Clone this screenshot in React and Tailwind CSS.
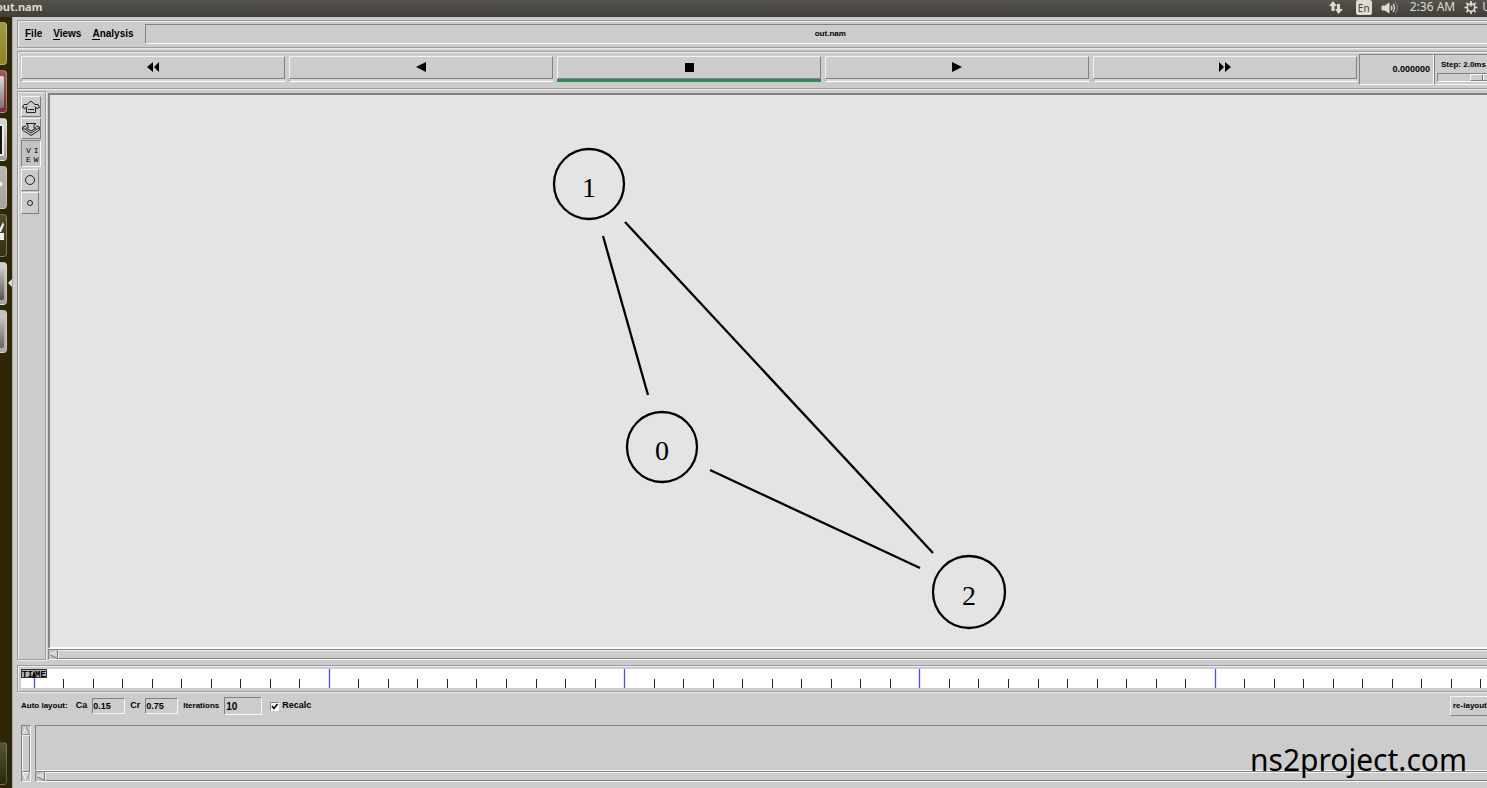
import React from 'react';

const raised = 'border border-t-[#f2f2f2] border-l-[#f2f2f2] border-r-[#808080] border-b-[#808080]';
const sunken = 'border border-t-[#828282] border-l-[#828282] border-r-[#f8f8f8] border-b-[#f8f8f8]';
const groove = 'border border-[#9c9c9c] shadow-[inset_1px_1px_0_#ececec,1px_1px_0_#ececec]';

const launcherItems = [
  { name: 'Files', className: 'bg-linear-to-b from-[#9f9a45] to-[#8d8521]' },
  { name: 'Browser', className: 'bg-linear-to-b from-[#a05a5a] to-[#7d2c32]', inner: 'bg-linear-to-b from-[#dddddd] to-[#777777]' },
  { name: 'Terminal', className: 'bg-linear-to-b from-[#d8d8d4] to-[#9b9b98]', inner: 'bg-[#151515] border-y-2 border-r-2 border-[#eeeeee]' },
  { name: 'Editor', className: 'bg-linear-to-b from-[#b9b9b4] to-[#a4a49f]', glyph: 'M0 9 L3 12 L0 15 Z' },
  { name: 'Settings', className: 'bg-linear-to-b from-[#4c4a2c] to-[#35320f]', glyph: 'M0 8 L3 2 L4 5 L1 12 L0 12 Z M0 13 H4 V20 H0 Z' },
  { name: 'Simulator', className: 'bg-linear-to-b from-[#d0d0cc] to-[#a2a29d]', inner: 'bg-linear-to-b from-[#c8c8c8] to-[#555555]', active: true },
  { name: 'Workspace', className: 'bg-linear-to-b from-[#c4c4c0] to-[#a8a8a4]', inner: 'bg-linear-to-b from-[#c8c8c8] to-[#666666]' },
];

const nodes = [
  { id: 1, x: 539, y: 89, r: 35 },
  { id: 0, x: 612, y: 352, r: 35 },
  { id: 2, x: 919, y: 497, r: 36 },
];

const links = [
  [553, 141, 598, 300],
  [575, 127, 883, 458],
  [660, 375, 870, 473],
];

const transport = [
  { label: 'Rewind', path: 'M6 0 V10 L0 5 Z M12 0 V10 L7 5 Z' },
  { label: 'Play backward', path: 'M11 0 V10 L1 5 Z' },
  { label: 'Stop', path: 'M2 1 H11 V10 H2 Z', active: true },
  { label: 'Play forward', path: 'M1 0 V10 L11 5 Z' },
  { label: 'Fast forward', path: 'M0 0 V10 L5 5 Z M6 0 V10 L12 5 Z' },
];

const TopBar = () => (
  <header className="flex h-[17px] items-start justify-between overflow-hidden bg-linear-to-b from-[#55534c] to-[#403f3a] font-['Noto_Sans',sans-serif] text-[12px] leading-[14px] text-[#dfdbd2]">
    <span className="-ml-1 text-[11px] font-bold">out.nam</span>
    <div className="-mr-1 flex items-start">
      <svg className="mr-3 h-4 w-4" viewBox="0 0 16 16" fill="#dfdbd2">
        <path d="M5 1 L9 6 H6.500 V11 H3.500 V6 H1 Z M9 4 H12 V9 H15 L10.500 14 L7 9 H9 Z" />
      </svg>
      <button className="mr-2 h-[15px] w-4 rounded-xs bg-[#dfdbd2] text-center text-[10px] text-[#45443f]">En</button>
      <svg className="mr-[10px] h-4 w-5" viewBox="0 0 20 16" fill="none" stroke="#dfdbd2">
        <path d="M2 6 H5 L9 3 V13 L5 10 H2 Z" fill="#dfdbd2" />
        <path d="M11 6 Q13 8 11 10 M13 4 Q16 8 13 12" strokeWidth="1.300" />
        <path d="M15 2 Q20 8 15 14" stroke="#8c8980" />
      </svg>
      <span className="mr-2">2:36 AM</span>
      <svg className="mr-[3px] h-[15px] w-4" viewBox="0 0 16 16" fill="none" stroke="#dfdbd2" strokeWidth="1.800">
        <circle cx="8" cy="8" r="4" />
        <path d="M8 1 V7 M8 12 V15 M1 8 H4 M12 8 H15 M3 3 L5 5 M13 3 L11 5 M3 13 L5 11 M13 13 L11 11" />
      </svg>
      <span>U</span>
    </div>
  </header>
);

const Launcher = () => (
  <aside className="relative flex w-3 shrink-0 flex-col gap-[5px] bg-[#2d2705] pt-[5px] pb-[3px]">
    {launcherItems.map((item) => (
      <div key={item.name} className={`relative flex h-[43px] w-[7px] items-center rounded-r-sm border-y border-r border-white/30 ${item.className}`}>
        {item.inner && <div className={`h-8 w-1 rounded-r-xs ${item.inner}`} />}
        {item.glyph && (
          <svg className="h-8 w-1" viewBox="0 0 4 32" fill="#f2eef4"><path d={item.glyph} /></svg>
        )}
        {item.active && (
          <svg className="absolute top-4 left-2 h-2 w-1" viewBox="0 0 4 8" fill="#dddddd"><path d="M4 0 V8 L0 4 Z" /></svg>
        )}
      </div>
    ))}
    <div className="mt-auto h-[43px] w-[7px] rounded-r-sm border-y border-r border-white/20 bg-linear-to-b from-[#55543c] to-[#2c2908]" />
  </aside>
);

const MenuBar = () => (
  <nav className={`flex h-7 items-center pl-[7px] ${groove}`}>
    {['File', 'Views', 'Analysis'].map((item) => (
      <button key={item} className="mr-[11px] text-[10px] leading-4">
        <span className="border-b border-black">{item[0]}</span>{item.slice(1)}
      </button>
    ))}
    <div className={`h-5 flex-1 text-center text-[8px] leading-[18px] ${sunken}`}>out.nam</div>
  </nav>
);

const Transport = () => (
  <section className={`flex h-[38px] gap-[2px] pt-[2px] pl-[3px] ${groove}`}>
    <div className="flex flex-1 gap-1 pt-[2px]">
      {transport.map((item) => (
        <div key={item.label} className="flex-1">
          <button aria-label={item.label} className={`flex h-[23px] w-full items-center justify-center ${raised}`}>
            <svg className="h-[11px] w-3" viewBox="0 0 12 11"><path d={item.path} /></svg>
          </button>
          <div className={item.active ? 'h-[3px] bg-[#2e8b57]' : 'h-[3px] border-b border-l border-b-white border-l-[#999999] bg-[#d6d6d6]'} />
        </div>
      ))}
    </div>
    <div className="flex">
      <div className={`h-[31px] w-[75px] pr-[3px] text-right text-[9px] leading-7 ${sunken}`}>0.000000</div>
      <div className={`h-[31px] w-[82px] pt-1 pl-[2px] ${sunken}`}>
        <label htmlFor="step" className="block pl-1 text-[8px] leading-3 whitespace-nowrap">Step: 2.0ms</label>
        <input
          id="step"
          type="range"
          defaultValue="70"
          className={`mt-[2px] block h-[9px] w-full appearance-none [&::-webkit-slider-thumb]:h-[7px] [&::-webkit-slider-thumb]:w-[30px] [&::-webkit-slider-thumb]:appearance-none [&::-webkit-slider-thumb]:border [&::-webkit-slider-thumb]:border-t-white [&::-webkit-slider-thumb]:border-r-[#808080] [&::-webkit-slider-thumb]:border-b-[#808080] [&::-webkit-slider-thumb]:border-l-white [&::-webkit-slider-thumb]:bg-[linear-gradient(90deg,#ccc_11px,#777_11px,#777_12px,#fff_12px,#fff_13px,#ccc_13px)] ${sunken}`}
        />
      </div>
    </div>
  </section>
);

const ToolPanel = () => (
  <div className={`flex w-[29px] shrink-0 flex-col items-start gap-px pt-1 pl-[3px] ${groove}`}>
    <button aria-label="Zoom in" className={`flex h-[21px] w-5 items-center justify-center ${raised}`}>
      <svg className="h-4 w-[18px] shrink-0" viewBox="0 0 18 16" fill="none" stroke="#222222">
        <path d="M9 2 L13 5.500 H16 L17.500 8.500 L15 9.500 L12.500 7.500 M9 2 L5 5.500 H2 L.5 8.500 L3 9.500 L5.500 7.500 M4.500 8 V13.500 H13.500 V8 M6 10.500 H12" />
      </svg>
    </button>
    <button aria-label="Zoom out" className={`flex h-[21px] w-5 items-center justify-center ${raised}`}>
      <svg className="h-4 w-[18px] shrink-0" viewBox="0 0 18 16" fill="none" stroke="#222222">
        <path d="M4 2.500 H14 L12 4 V7 H14 L9 10 L4 7 H6 V4 Z M4 5 L.5 6 V9 L9 14.500 L17.500 9 V6 L14 5 M.5 6.500 L9 12 L17.500 6.500" />
      </svg>
    </button>
    <button className={`h-[27px] w-5 bg-[#c2c2c2] pt-[2px] pl-1 font-['Liberation_Mono',monospace] text-[8px] leading-[9px] font-normal ${sunken}`}>
      <span className="flex gap-[3px]"><span>V</span><span>I</span></span>
      <span className="flex gap-[3px]"><span>E</span><span>W</span></span>
    </button>
    <button aria-label="Larger nodes" className={`mt-px flex h-[22px] w-[18px] items-center justify-center ${raised}`}>
      <svg className="h-3 w-3" viewBox="0 0 12 12" fill="none" stroke="#222222"><circle cx="6" cy="6" r="4.500" /></svg>
    </button>
    <button aria-label="Smaller nodes" className={`flex h-[22px] w-[18px] items-center justify-center ${raised}`}>
      <svg className="h-2 w-2" viewBox="0 0 8 8" fill="none" stroke="#222222"><circle cx="4" cy="4" r="2.500" /></svg>
    </button>
  </div>
);

const HScroll = () => (
  <div className={`flex h-[11px] bg-[#c3c3c3] ${sunken}`}>
    <button aria-label="Scroll left" className="w-[9px] shrink-0">
      <svg className="h-[9px] w-[9px]" viewBox="0 0 9 9" fill="#d6d6d6">
        <path d="M8.500 .5 L.5 4.500 L8.500 8.500 Z" stroke="#777777" />
        <path d="M8 .5 L.5 4.500" stroke="#ffffff" />
      </svg>
    </button>
    <div className={`flex-1 bg-[#cccccc] ${raised}`} />
  </div>
);

const Network = () => (
  <div className="flex min-w-0 flex-1 flex-col pt-[2px]">
    <div className="flex-1 overflow-hidden border-2 border-t-[#828282] border-r-white border-b-white border-l-[#828282] bg-[#e4e4e4]">
      <svg className="block h-[540px] w-full font-['Liberation_Serif',serif] text-[28px] font-normal">
        {links.map(([x1, y1, x2, y2]) => (
          <line key={`${x1}-${y1}`} x1={x1} y1={y1} x2={x2} y2={y2} stroke="black" strokeWidth="2.300" />
        ))}
        {nodes.map((node) => (
          <g key={node.id}>
            <circle cx={node.x} cy={node.y} r={node.r} fill="none" stroke="black" strokeWidth="2.300" />
            <text x={node.x} y={node.y + 13} textAnchor="middle">{node.id}</text>
          </g>
        ))}
      </svg>
    </div>
    <HScroll />
  </div>
);

const Timeline = () => (
  <section className={`h-[27px] p-[3px] ${groove}`}>
    <svg className="block h-[19px] w-full bg-white font-['Liberation_Mono',monospace] text-[9px] font-bold">
      {Array.from({ length: 51 }, (_, i) => {
        const major = i % 10 === 0;
        const x = Math.floor(13 + i * 29.53) + 0.5;
        return <line key={i} x1={x} x2={x} y1={major ? 0 : 10} y2="19" stroke={major ? '#4a4aff' : '#222222'} strokeWidth={major ? 1.3 : 1} />;
      })}
      <rect x=".5" y=".5" width="25" height="8" fill="#b4b4b4" stroke="#333333" />
      <text x="1" y="8">TI</text>
      <text x="14" y="8">ME</text>
      <path d="M13 1 L15 9 H11 Z" />
    </svg>
  </section>
);

const AutoLayout = () => (
  <form className="flex h-7 items-center pl-1 text-[8px]">
    <span className="mr-2">Auto layout:</span>
    <label htmlFor="ca" className="mr-[5px] text-[9px]">Ca</label>
    <input id="ca" defaultValue="0.15" className={`mr-[5px] h-4 w-[33px] text-[9px] ${sunken}`} />
    <label htmlFor="cr" className="mr-[5px] text-[9px]">Cr</label>
    <input id="cr" defaultValue="0.75" className={`mr-[5px] h-4 w-[33px] text-[9px] ${sunken}`} />
    <label htmlFor="iterations" className="mr-[5px]">Iterations</label>
    <input id="iterations" defaultValue="10" className={`mr-2 h-[18px] w-[38px] pl-px text-[10px] ${sunken}`} />
    <label className="flex items-center gap-[3px] text-[9px]">
      <span className="relative h-[9px] w-[9px]">
        <input type="checkbox" defaultChecked className={`peer block h-[9px] w-[9px] appearance-none bg-white ${sunken}`} />
        <svg className="pointer-events-none absolute inset-0 hidden h-[9px] w-[9px] peer-checked:block" viewBox="0 0 9 9" fill="none" stroke="black" strokeWidth="1.600">
          <path d="M2 4 L4 6.500 L7.500 2" />
        </svg>
      </span>
      Recalc
    </label>
    <button type="button" className={`mr-[3px] ml-auto h-5 w-16 pl-[2px] text-left ${raised}`}>re-layout</button>
  </form>
);

const Trace = () => (
  <section className="flex h-[57px] gap-1 pl-1">
    <div className={`flex w-[10px] shrink-0 flex-col bg-[#c3c3c3] ${sunken}`}>
      <button aria-label="Scroll up" className="h-[9px]">
        <svg className="h-[9px] w-2" viewBox="0 0 8 9" fill="#d6d6d6"><path d="M4 .5 L7.500 8.500 H.5 Z" stroke="#888888" /><path d="M4 .5 L.5 8.500" stroke="white" /></svg>
      </button>
      <div className={`flex-1 bg-[#cccccc] ${raised}`} />
      <button aria-label="Scroll down" className="h-[9px]">
        <svg className="h-[9px] w-2" viewBox="0 0 8 9" fill="#d6d6d6"><path d="M4 8.500 L7.500 .5 H.5 Z" stroke="#888888" /><path d="M4 8.500 L.5 .5 H7" stroke="white" /></svg>
      </button>
    </div>
    <div className="flex flex-1 flex-col">
      <div className={`flex-1 ${sunken}`} />
      <HScroll />
    </div>
  </section>
);

const App = () => (
  <div className="relative flex min-h-screen flex-col overflow-hidden bg-[#cccccc] font-['Liberation_Sans',sans-serif] text-black">
    <TopBar />
    <div className="flex flex-1">
      <Launcher />
      <main className="-mr-[30px] flex min-w-0 flex-1 flex-col border-l border-[#a8a8a8] pt-[3px] pb-[6px] pl-1 font-bold">
        <MenuBar />
        <div className="h-[3px]" />
        <Transport />
        <div className="flex flex-1 gap-[2px] pt-[2px] pb-[5px]">
          <ToolPanel />
          <Network />
        </div>
        <Timeline />
        <AutoLayout />
        <div className="h-[5px]" />
        <Trace />
      </main>
    </div>
    <a href="#ns2project" className="absolute right-5 bottom-2 font-['Noto_Sans',sans-serif] text-[30px] leading-10">ns2project.com</a>
  </div>
);

export default App;
